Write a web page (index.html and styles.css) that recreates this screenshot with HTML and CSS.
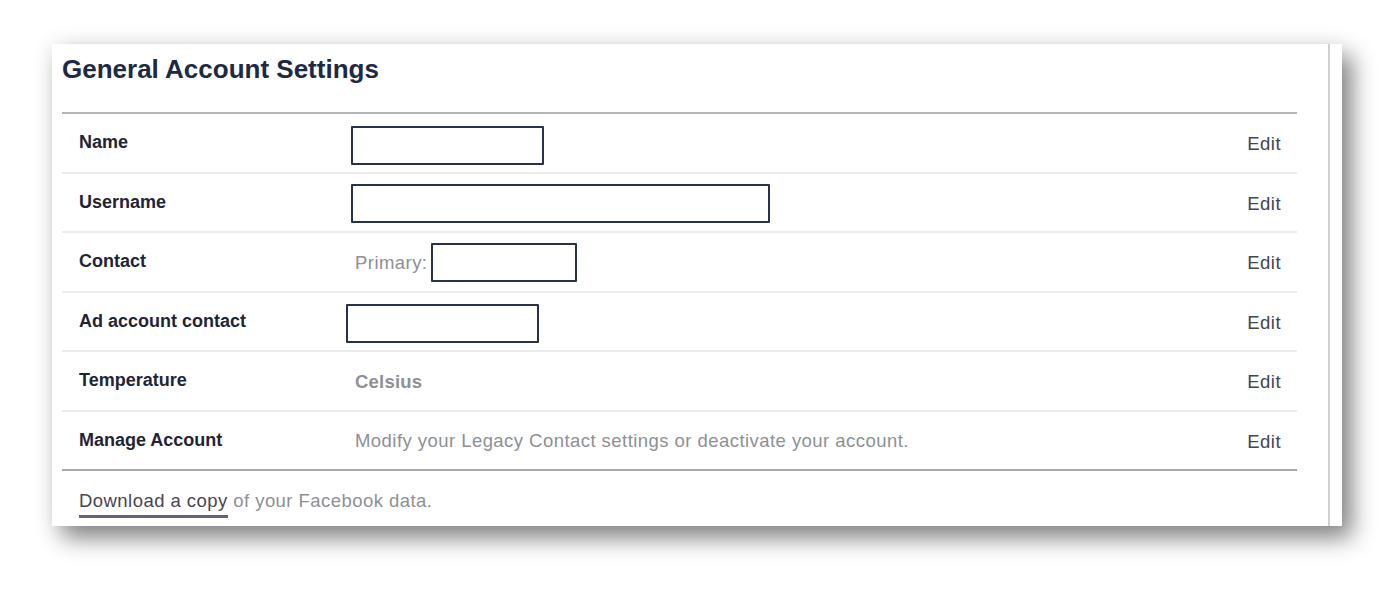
FILE: index.html
```html
<!DOCTYPE html>
<html lang="en">
<head>
<meta charset="utf-8">
<title>General Account Settings</title>
<link rel="stylesheet" href="styles.css">
</head>
<body>
<div class="page">
  <div class="card">
    <div class="card-inner">
      <h2 class="title">General Account Settings</h2>
      <div class="rows">
        <div class="row">
          <div class="label">Name</div>
          <div class="value"><span class="field field-name"></span></div>
          <a class="edit">Edit</a>
        </div>
        <div class="row">
          <div class="label">Username</div>
          <div class="value"><span class="field field-username"></span></div>
          <a class="edit">Edit</a>
        </div>
        <div class="row">
          <div class="label">Contact</div>
          <div class="value"><span class="muted">Primary:</span><span class="field field-contact"></span></div>
          <a class="edit">Edit</a>
        </div>
        <div class="row">
          <div class="label">Ad account contact</div>
          <div class="value"><span class="field field-ad"></span></div>
          <a class="edit">Edit</a>
        </div>
        <div class="row">
          <div class="label">Temperature</div>
          <div class="value"><span class="strong-muted">Celsius</span></div>
          <a class="edit">Edit</a>
        </div>
        <div class="row row-last">
          <div class="label">Manage Account</div>
          <div class="value"><span class="muted">Modify your Legacy Contact settings or deactivate your account.</span></div>
          <a class="edit">Edit</a>
        </div>
      </div>
      <div class="footer">
        <a class="download">Download a copy</a><span class="muted"> of your Facebook data.</span>
      </div>
    </div>
  </div>
</div>
</body>
</html>
```

FILE: styles.css
```css
html, body {
  margin: 0;
  padding: 0;
  background: #ffffff;
}

body {
  font-family: "Liberation Sans", Arial, Helvetica, sans-serif;
  width: 1400px;
  height: 606px;
  overflow: hidden;
}

.page {
  padding: 44px 0 0 52px;
}

.card {
  width: 1290px;
  height: 482px;
  box-sizing: border-box;
  background: #ffffff;
  padding-right: 12px;
  box-shadow: 10px 12px 22px rgba(0, 0, 0, 0.47), 0 0 24px rgba(0, 0, 0, 0.07);
}

.card-inner {
  height: 100%;
  box-sizing: border-box;
  border-right: 2px solid #d0d0d0;
  padding: 0 31px 0 10px;
  display: flex;
  flex-direction: column;
}

.title {
  margin: 0;
  padding: 10px 0 28px;
  font-size: 26px;
  line-height: 30px;
  font-weight: bold;
  color: #1d2a46;
  border-bottom: 2px solid #b4b4b4;
}

.rows {
  display: flex;
  flex-direction: column;
}

.row {
  height: 59.5px;
  box-sizing: border-box;
  display: flex;
  align-items: center;
  padding: 0 16px 0 17px;
  border-bottom: 2px solid #ebebeb;
}

.row-last {
  border-bottom: 2px solid #a8a8a8;
}

.label {
  width: 276px;
  flex: none;
  font-size: 18px;
  font-weight: bold;
  color: #1f2536;
}

.value {
  flex: 1;
  display: flex;
  align-items: center;
  font-size: 18.5px;
  letter-spacing: 0.45px;
  padding-top: 2px;
}

.muted {
  color: #8e9096;
}

.strong-muted {
  color: #8e9096;
  font-weight: bold;
  letter-spacing: 0.2px;
}

.field {
  display: block;
  box-sizing: border-box;
  height: 39px;
  border: 2px solid #28324c;
  border-radius: 1px;
  background: #ffffff;
  margin-top: 4px;
}

.field-name {
  width: 193px;
  margin-left: -4px;
}

.field-username {
  width: 419px;
  margin-left: -4px;
  margin-top: 1px;
}

.field-contact {
  width: 146px;
  margin-left: 4px;
  margin-top: 0;
}

.field-ad {
  width: 193px;
  margin-left: -9px;
  margin-top: 2px;
}

.edit {
  flex: none;
  font-size: 18.5px;
  letter-spacing: 0.45px;
  color: #3f4655;
  text-decoration: none;
  padding-top: 3px;
}

.footer {
  padding: 17px 0 0 17px;
  font-size: 18.5px;
  letter-spacing: 0.45px;
  line-height: 26px;
}

.download {
  color: #4a4552;
  text-decoration: none;
  border-bottom: 3px solid #6b6176;
  padding-bottom: 4px;
}
```
